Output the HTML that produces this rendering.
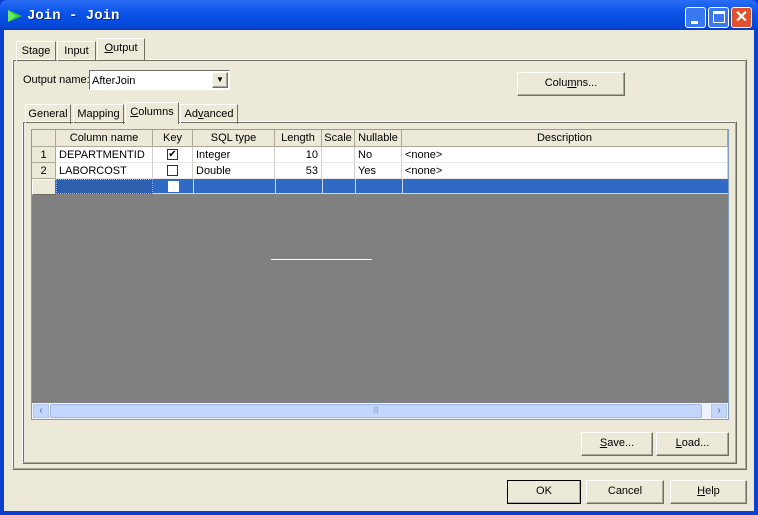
<!DOCTYPE html><html><head><style>
*{box-sizing:border-box;margin:0;padding:0}
body{width:758px;height:515px;position:relative;background:#0a3fd0;font-family:"Liberation Sans",sans-serif;font-size:11px;color:#000;overflow:hidden}
.a{position:absolute}
.tb{left:0;top:0;width:758px;height:30px;background:linear-gradient(#2a6df5,#0c55e8 40%,#0447d8 90%,#0a3bb8);border-radius:7px 7px 0 0}
.body{left:4px;top:30px;width:750px;height:481px;background:#ece9d8}
.btn3{background:#ece9d8;border:1px solid;border-color:#fff #716f64 #716f64 #fff;box-shadow:inset -1px -1px 0 #aca899;text-align:center;line-height:21px}
.tab{top:0;height:20px;line-height:19px;text-align:center;border:1px solid;border-color:#fff #716f64 transparent #fff;border-bottom:none}
.panel{border:1px solid;border-color:#fff #716f64 #716f64 #fff;box-shadow:inset -1px -1px 0 #aca899,1px 1px 0 #716f64 inset}
.h{background:#ece9d8;border-right:1px solid #aca899;border-bottom:1px solid #aca899;text-align:center;line-height:16px;height:17px;top:0}
.c{line-height:17px;height:16px;border-right:1px solid #d4d0c8;border-bottom:1px solid #e8e8e8;padding:0 3px;white-space:nowrap}
u{text-decoration:underline}
</style></head><body>
<div class="a tb"></div>
<svg class="a" style="left:7px;top:9px" width="16" height="14"><path d="M1 1L15 7L1 13L5 7Z" fill="#3c3"/><path d="M1 1L9 7L1 13" fill="#6e6"/></svg>
<div class="a" style="left:27px;top:8px;color:#fff;font:bold 14px 'Liberation Mono',monospace;text-shadow:1px 1px #0a2890">Join - Join</div>
<div class="a" style="left:685px;top:7px;width:21px;height:21px;border:1px solid #fff;border-radius:3px;background:#3a78f0"><div class="a" style="left:5px;top:13px;width:7px;height:3px;background:#fff"></div></div>
<div class="a" style="left:708px;top:7px;width:21px;height:21px;border:1px solid #fff;border-radius:3px;background:#3a78f0"><div class="a" style="left:4px;top:3px;width:12px;height:12px;border:1px solid #fff;border-top-width:3px"></div></div>
<div class="a" style="left:731px;top:7px;width:21px;height:21px;border:1px solid #fff;border-radius:3px;background:#e0502c;color:#fff;font:bold 16px sans-serif;text-align:center;line-height:19px">✕</div>
<div class="a body"></div>

<div class="a panel" style="left:12px;top:59px;width:735px;height:411px"></div>
<div class="a tab" style="left:16px;top:41px;width:40px">Stage</div>
<div class="a tab" style="left:57px;top:41px;width:39px">Input</div>
<div class="a tab" style="left:97px;top:38px;width:48px;height:22px;background:#ece9d8"><u>O</u>utput</div>

<div class="a" style="left:23px;top:74px">Output name:</div>
<div class="a" style="left:89px;top:70px;width:141px;height:20px;border:1px solid;border-color:#716f64 #fff #fff #716f64;background:#fff;padding:4px 2px 0">AfterJoin</div>
<div class="a btn3" style="left:212px;top:72px;width:16px;height:16px;font-size:8px;line-height:14px">▼</div>
<div class="a btn3" style="left:517px;top:72px;width:108px;height:24px">Colu<u>m</u>ns...</div>

<div class="a panel" style="left:22px;top:121px;width:715px;height:343px"></div>
<div class="a tab" style="left:25px;top:104px;width:46px">General</div>
<div class="a tab" style="left:73px;top:104px;width:51px">Mapping</div>
<div class="a tab" style="left:125px;top:102px;width:54px;height:22px;background:#ece9d8;line-height:19px"><u>C</u>olumns</div>
<div class="a tab" style="left:180px;top:104px;width:58px">Ad<u>v</u>anced</div>

<div class="a" style="left:31px;top:129px;width:698px;height:291px;background:#808080;border:1px solid #7f9db9">
 <div class="a h" style="left:0;width:24px"></div>
 <div class="a h" style="left:24px;width:97px">Column name</div>
 <div class="a h" style="left:121px;width:40px">Key</div>
 <div class="a h" style="left:161px;width:82px">SQL type</div>
 <div class="a h" style="left:243px;width:47px">Length</div>
 <div class="a h" style="left:290px;width:33px">Scale</div>
 <div class="a h" style="left:323px;width:47px">Nullable</div>
 <div class="a h" style="left:370px;width:326px">Description</div>
 <div class="a" style="left:0;top:17px;width:696px;height:32px;background:#fff"></div>
 <div class="a h" style="left:0;top:17px;width:24px;height:16px">1</div>
 <div class="a h" style="left:0;top:33px;width:24px;height:16px">2</div>
 <div class="a h" style="left:0;top:49px;width:24px;height:16px;border:1px solid;border-color:#fff #716f64 #716f64 #fff"></div>
 <div class="a c" style="left:24px;top:17px;width:97px">DEPARTMENTID</div>
 <div class="a c" style="left:24px;top:33px;width:97px">LABORCOST</div>
 <div class="a c" style="left:121px;top:17px;width:40px"><div class="a" style="left:14px;top:2px;width:11px;height:11px;border:1px solid #333;font-size:10px;line-height:9px;text-align:center">✔</div></div>
 <div class="a c" style="left:121px;top:33px;width:40px"><div class="a" style="left:14px;top:2px;width:11px;height:11px;border:1px solid #333"></div></div>
 <div class="a c" style="left:161px;top:17px;width:82px">Integer</div>
 <div class="a c" style="left:161px;top:33px;width:82px">Double</div>
 <div class="a c" style="left:243px;top:17px;width:47px;text-align:right">10</div>
 <div class="a c" style="left:243px;top:33px;width:47px;text-align:right">53</div>
 <div class="a c" style="left:290px;top:17px;width:33px"></div>
 <div class="a c" style="left:290px;top:33px;width:33px"></div>
 <div class="a c" style="left:323px;top:17px;width:47px">No</div>
 <div class="a c" style="left:323px;top:33px;width:47px">Yes</div>
 <div class="a c" style="left:370px;top:17px;width:326px">&lt;none&gt;</div>
 <div class="a c" style="left:370px;top:33px;width:326px">&lt;none&gt;</div>
 <div class="a" style="left:24px;top:49px;width:672px;height:15px;background:#316ac5;border-bottom:1px solid #d0d8e8"></div>
 <div class="a" style="left:24px;top:49px;width:97px;height:15px;background:#2e5fae;border:1px dotted #aac"></div>
 <div class="a" style="left:161px;top:49px;width:1px;height:15px;background:#d0d8e8"></div>
 <div class="a" style="left:243px;top:49px;width:1px;height:15px;background:#d0d8e8"></div>
 <div class="a" style="left:290px;top:49px;width:1px;height:15px;background:#d0d8e8"></div>
 <div class="a" style="left:323px;top:49px;width:1px;height:15px;background:#d0d8e8"></div>
 <div class="a" style="left:370px;top:49px;width:1px;height:15px;background:#d0d8e8"></div>
 <div class="a" style="left:136px;top:51px;width:11px;height:11px;background:#fff"></div>
 <div class="a" style="left:239px;top:129px;width:101px;height:1px;background:#fff"></div>
 <div class="a" style="left:0;top:273px;width:696px;height:16px;background:#eef3fd"></div>
 <div class="a" style="left:1px;top:274px;width:16px;height:14px;background:#c3d6fb;border:1px solid #b0c8f0;color:#4d6185;font-size:10px;line-height:12px;text-align:center">‹</div>
 <div class="a" style="left:18px;top:274px;width:652px;height:14px;background:#c3d6fb;border:1px solid #a0b8e8;border-radius:2px;color:#7c98d0;font-size:7px;text-align:center;line-height:12px">|||</div>
 <div class="a" style="left:679px;top:274px;width:16px;height:14px;background:#c3d6fb;border:1px solid #b0c8f0;color:#4d6185;font-size:10px;line-height:12px;text-align:center">›</div>
</div>

<div class="a btn3" style="left:581px;top:432px;width:72px;height:24px"><u>S</u>ave...</div>
<div class="a btn3" style="left:656px;top:432px;width:73px;height:24px"><u>L</u>oad...</div>
<div class="a btn3" style="left:507px;top:480px;width:74px;height:24px;border:1px solid #000">OK</div>
<div class="a btn3" style="left:586px;top:480px;width:78px;height:24px">Cancel</div>
<div class="a btn3" style="left:670px;top:480px;width:77px;height:24px"><u>H</u>elp</div>
</body></html>
